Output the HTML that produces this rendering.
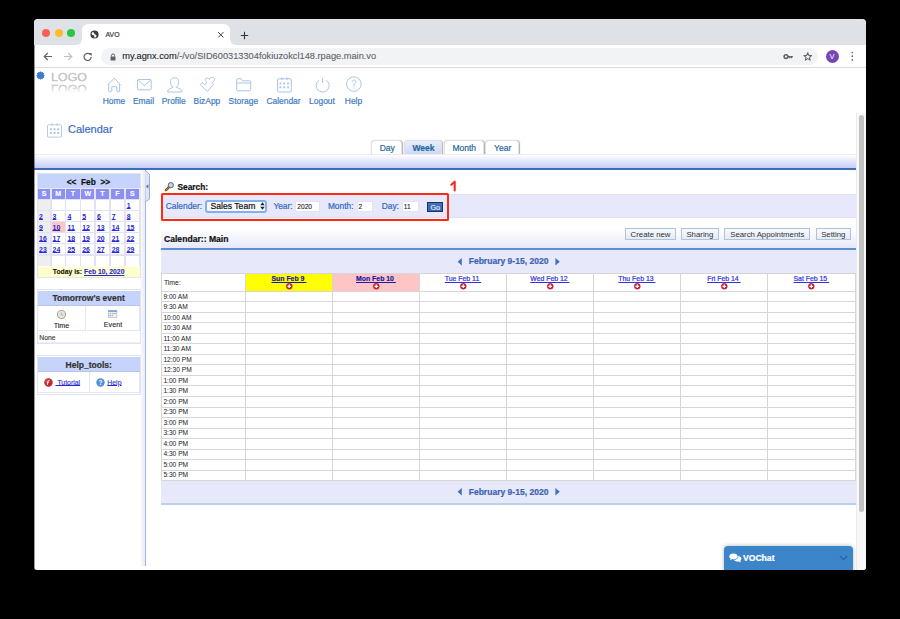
<!DOCTYPE html><html><head><meta charset="utf-8"><title>AVO</title><style>
*{box-sizing:border-box;margin:0;padding:0}
html,body{width:900px;height:619px;background:#000;overflow:hidden;font-family:"Liberation Sans",sans-serif}
.abs{position:absolute}
#win{position:absolute;left:34px;top:19px;width:832px;height:551px;background:linear-gradient(#cfd2d7 0,#dee1e6 2px,#dee1e6 26px,#fff 26px);border-radius:4px 4px 3px 3px;overflow:hidden}
.t{position:absolute;white-space:nowrap;line-height:1;-webkit-text-stroke:0.2px currentColor}
.nav{color:#3f7cc2;font-size:8.4px}
.ico{position:absolute;overflow:visible}
.lnk{color:#1a1acc;text-decoration:underline}
</style></head><body>
<div id="win">
<div class="abs" style="left:0.00px;top:0.00px;width:832.00px;height:26.00px;background:#dee1e6"></div>
<div class="abs" style="left:8.30px;top:9.50px;width:8.00px;height:8.00px;background:#fe5f57;border-radius:50%"></div>
<div class="abs" style="left:20.60px;top:9.50px;width:8.00px;height:8.00px;background:#febc2e;border-radius:50%"></div>
<div class="abs" style="left:32.90px;top:9.50px;width:8.00px;height:8.00px;background:#28c840;border-radius:50%"></div>
<div class="abs" style="left:48.00px;top:5.00px;width:148.00px;height:21.00px;background:#fff;border-radius:6px 6px 0 0"></div>
<svg class="ico" style="left:42.00px;top:20.00px" width="6" height="6" viewBox="0 0 6 6"><path d="M6 0 V6 H0 A6 6 0 0 0 6 0Z" fill="#fff"/></svg>
<svg class="ico" style="left:196.00px;top:20.00px" width="6" height="6" viewBox="0 0 6 6"><path d="M0 0 V6 H6 A6 6 0 0 1 0 0Z" fill="#fff"/></svg>
<svg class="ico" style="left:56.30px;top:11.30px" width="9" height="9" viewBox="0 0 9 9"><circle cx="4.5" cy="4.5" r="4.1" fill="#3c3d40"/><path d="M2.1 2.4 C2.9 1.9 4.2 2.1 4.1 3.1 C4 3.9 4.7 4.3 5.5 4.7 C6.6 5.2 6.8 6.1 6.1 6.9 C5.5 7.5 4.5 7.6 3.7 7.3 C4.6 6.6 4.9 6 4 5.5 C3.1 5.1 1.9 4.9 1.6 3.9 C1.4 3.3 1.6 2.8 2.1 2.4Z" fill="#fff"/></svg>
<div class="t" style="left:71.50px;top:13.46px;font-size:6.9px;color:#3c3c3c">AVO</div>
<svg class="ico" style="left:182.80px;top:12.20px" width="7.6" height="7.6" viewBox="0 0 7.6 7.6"><path d="M1.2 1.2 L6.4 6.4 M6.4 1.2 L1.2 6.4" stroke="#3c3c3c" stroke-width="1.0"/></svg>
<svg class="ico" style="left:205.50px;top:11.50px" width="9" height="9" viewBox="0 0 9 9"><path d="M4.5 0.8 V8.2 M0.8 4.5 H8.2" stroke="#333" stroke-width="1.1"/></svg>
<div class="abs" style="left:0.00px;top:26.00px;width:832.00px;height:22.00px;background:#fff"></div>
<div class="abs" style="left:0.00px;top:48.00px;width:832.00px;height:1.00px;background:#dadce0"></div>
<svg class="ico" style="left:9.00px;top:33.00px" width="10" height="9" viewBox="0 0 10 9"><path d="M9 4.5 H1.3 M4.8 1 L1.2 4.5 L4.8 8" stroke="#5f6368" stroke-width="1.2" fill="none"/></svg>
<svg class="ico" style="left:29.00px;top:33.00px" width="10" height="9" viewBox="0 0 10 9"><path d="M1 4.5 H8.7 M5.2 1 L8.8 4.5 L5.2 8" stroke="#bdc1c6" stroke-width="1.2" fill="none"/></svg>
<svg class="ico" style="left:48.50px;top:32.80px" width="10" height="10" viewBox="0 0 10 10"><path d="M8.2 4.9 A3.6 3.6 0 1 1 7.1 2.3" stroke="#5f6368" stroke-width="1.2" fill="none"/><path d="M5.4 0.9 H8.6 V4.1 Z" fill="#5f6368"/></svg>
<div class="abs" style="left:67.00px;top:29.00px;width:717.00px;height:17.00px;background:#f1f3f4;border-radius:9px"></div>
<svg class="ico" style="left:75.50px;top:33.60px" width="6" height="8" viewBox="0 0 6 8"><path d="M1.4 3.6 V2.6 A1.6 1.6 0 0 1 4.6 2.6 V3.6" stroke="#5f6368" stroke-width="1" fill="none"/><rect x="0.5" y="3.5" width="5" height="4" rx="0.6" fill="#5f6368"/></svg>
<div class="t" id="url" style="left:88.30px;top:33.07px;font-size:9.25px;-webkit-text-stroke:0.1px currentColor"><span style="color:#202124">my.agnx.com</span><span style="color:#5f6368">/-/vo/SID600313304fokiuzokcl148.rpage.main.vo</span></div>
<svg class="ico" style="left:748.50px;top:33.50px" width="11" height="8" viewBox="0 0 11 8"><circle cx="3" cy="3.6" r="1.9" fill="none" stroke="#5f6368" stroke-width="1.5"/><path d="M4.6 2.9 H9.8 V4.4 H9 V5.3 H8 V4.4 H7.2 V5.3 H6.2 V4.4 H4.6Z" fill="#5f6368"/></svg>
<svg class="ico" style="left:769.00px;top:32.80px" width="9.5" height="9" viewBox="0 0 9.5 9"><path d="M4.75 0.8 L5.85 3.4 L8.6 3.6 L6.5 5.4 L7.15 8.1 L4.75 6.6 L2.35 8.1 L3 5.4 L0.9 3.6 L3.65 3.4Z" fill="none" stroke="#5f6368" stroke-width="1.05" stroke-linejoin="round"/></svg>
<div class="abs" style="left:791.50px;top:30.80px;width:13.00px;height:13.00px;background:#7646b8;border-radius:50%"></div>
<div class="t" style="left:598.00px;width:400px;text-align:center;top:33.94px;font-size:7.4px;color:#fff;-webkit-text-stroke:0">V</div>
<svg class="ico" style="left:815.50px;top:32.00px" width="5" height="11" viewBox="0 0 5 11"><circle cx="2.3" cy="1.5" r="0.85" fill="#5f6368"/><circle cx="2.3" cy="5.2" r="0.85" fill="#5f6368"/><circle cx="2.3" cy="8.9" r="0.85" fill="#5f6368"/></svg>
<svg class="ico" style="left:2.30px;top:51.80px" width="9" height="9" viewBox="0 0 9 9"><path d="M8.80 4.50 L7.78 5.38 L8.22 6.65 L6.90 6.90 L6.65 8.22 L5.38 7.78 L4.50 8.80 L3.62 7.78 L2.35 8.22 L2.10 6.90 L0.78 6.65 L1.22 5.38 L0.20 4.50 L1.22 3.62 L0.78 2.35 L2.10 2.10 L2.35 0.78 L3.62 1.22 L4.50 0.20 L5.38 1.22 L6.65 0.78 L6.90 2.10 L8.22 2.35 L7.78 3.62Z" fill="#3b7bd0"/></svg>
<div class="t" style="left:17.0px;top:54.2px;font-size:10.4px;color:#c4c4c4;-webkit-text-stroke:0.35px #c4c4c4;transform:scaleX(1.2);transform-origin:0 0;">LOGO</div>
<div class="t" style="left:17.0px;top:63.5px;font-size:10.4px;color:#b8b8b8;-webkit-text-stroke:0.35px #b8b8b8;transform:scaleX(1.2) scaleY(-1.12);transform-origin:0 50%;-webkit-mask-image:linear-gradient(to top,rgba(0,0,0,0.95) 15%,rgba(0,0,0,0) 90%);">LOGO</div>
<div class="t" style="left:-120.10px;width:400px;text-align:center;top:77.55px;font-size:8.45px;color:#3f7cc2">Home</div>
<div class="t" style="left:-90.50px;width:400px;text-align:center;top:77.55px;font-size:8.45px;color:#3f7cc2">Email</div>
<div class="t" style="left:-60.30px;width:400px;text-align:center;top:77.55px;font-size:8.45px;color:#3f7cc2">Profile</div>
<div class="t" style="left:-27.10px;width:400px;text-align:center;top:77.55px;font-size:8.45px;color:#3f7cc2">BizApp</div>
<div class="t" style="left:9.40px;width:400px;text-align:center;top:77.55px;font-size:8.45px;color:#3f7cc2">Storage</div>
<div class="t" style="left:49.50px;width:400px;text-align:center;top:77.55px;font-size:8.45px;color:#3f7cc2">Calendar</div>
<div class="t" style="left:88.00px;width:400px;text-align:center;top:77.55px;font-size:8.45px;color:#3f7cc2">Logout</div>
<div class="t" style="left:119.50px;width:400px;text-align:center;top:77.55px;font-size:8.45px;color:#3f7cc2">Help</div>
<svg class="ico" style="left:73.00px;top:57.50px" width="15" height="16" viewBox="0 0 15 16"><path d="M0.6 8.1 L7.3 1.1 L13.7 8.1 M1.7 6.9 V14.2 Q1.7 14.7 2.2 14.7 H4.3 Q4.8 14.7 4.8 14.2 V9.7 H9.8 V14.2 Q9.8 14.7 10.3 14.7 H12.1 Q12.6 14.7 12.6 14.2 V6.9" stroke="#a9c6e8" stroke-width="1" fill="none"/></svg>
<svg class="ico" style="left:102.50px;top:59.80px" width="15" height="12" viewBox="0 0 15 12"><rect x="0.5" y="0.5" width="13.7" height="10.3" rx="1" stroke="#a9c6e8" stroke-width="1" fill="none"/><path d="M0.9 0.9 L7.35 6.6 L13.8 0.9" stroke="#a9c6e8" stroke-width="1" fill="none"/></svg>
<svg class="ico" style="left:132.50px;top:57.50px" width="16" height="16" viewBox="0 0 16 16"><path d="M5.8 9.8 C4.4 9 3.6 7.6 3.6 5.6 V4.2 C3.6 2 5.2 0.7 7.6 0.7 C10 0.7 11.6 2 11.6 4.2 V5.6 C11.6 7.6 10.8 9 9.4 9.8 V10.4 C11.8 11.2 14.8 12.4 14.8 14.2 V15 H0.7 V14.2 C0.7 12.4 3.6 11.2 5.8 10.4 Z" stroke="#a9c6e8" stroke-width="1" fill="none"/></svg>
<svg class="ico" style="left:165.00px;top:57.00px" width="17" height="17" viewBox="0 0 17 17"><path d="M8.2 15.4 L1.2 8.4 L3.4 6.3 C4 7.4 4.4 8.4 5.4 8.4 C6.6 8.4 7.8 7.2 7.6 6.1 C7.2 5 6 4.4 6.4 3.2 C6.8 2.2 8.6 1.8 9.6 2.4 L10.3 3.4 C10.8 2.4 11.6 1.5 12.8 1.3 C14.2 1.2 15.6 2.2 15.6 3.4 C15.6 4.6 14.6 5.4 13.2 6.4 L14.6 8.4 Z" stroke="#a9c6e8" stroke-width="1" fill="none"/></svg>
<svg class="ico" style="left:202.00px;top:58.50px" width="16" height="14" viewBox="0 0 16 14"><path d="M0.7 2 Q0.7 0.8 1.9 0.8 H5.3 L6.6 2.8 H13.6 Q14.7 2.8 14.7 3.9 V11.8 Q14.7 12.8 13.6 12.8 H1.8 Q0.7 12.8 0.7 11.8 Z M0.7 5 H14.7" stroke="#a9c6e8" stroke-width="1" fill="none"/></svg>
<svg class="ico" style="left:242.50px;top:57.50px" width="15" height="16" viewBox="0 0 15 16"><rect x="0.5" y="1.8" width="13.8" height="13.2" rx="1.2" fill="none" stroke="#a9c6e8" stroke-width="1"/><path d="M4.8 0.3 V3.2 M10 0.3 V3.2" stroke="#a9c6e8" stroke-width="1"/><rect x="2.45" y="5.55" width="1.9" height="1.9" fill="#a9c6e8"/><rect x="2.45" y="9.35" width="1.9" height="1.9" fill="#a9c6e8"/><rect x="6.25" y="5.55" width="1.9" height="1.9" fill="#a9c6e8"/><rect x="6.25" y="9.35" width="1.9" height="1.9" fill="#a9c6e8"/><rect x="10.05" y="5.55" width="1.9" height="1.9" fill="#a9c6e8"/><rect x="10.05" y="9.35" width="1.9" height="1.9" fill="#a9c6e8"/></svg>
<svg class="ico" style="left:280.50px;top:57.50px" width="15" height="16" viewBox="0 0 15 16"><path d="M3.87 3.28 A6.5 6.5 0 1 0 11.33 3.28" stroke="#a9c6e8" stroke-width="1" fill="none"/><path d="M7.6 0.8 V6.1" stroke="#a9c6e8" stroke-width="1" fill="none"/></svg>
<svg class="ico" style="left:311.50px;top:57.00px" width="16" height="16" viewBox="0 0 16 16"><circle cx="7.9" cy="8.1" r="7.3" stroke="#a9c6e8" stroke-width="1" fill="none"/><path d="M6.1 6 C6.1 4.7 6.9 4.1 7.9 4.1 C8.9 4.1 9.7 4.8 9.7 5.8 C9.7 7 8 7.4 8 9.2 V10.4" stroke="#a9c6e8" stroke-width="1" fill="none"/><circle cx="8" cy="12.1" r="0.55" fill="#a9c6e8"/></svg>
<svg class="ico" style="left:13.00px;top:103.50px" width="15" height="15" viewBox="0 0 15 15"><rect x="0.5" y="1.8" width="14" height="12.3" rx="0.8" fill="none" stroke="#b4cde8" stroke-width="1"/><path d="M5.2 0.3 V2.8 M10 0.3 V2.8" stroke="#b4cde8" stroke-width="1.2"/><rect x="2.90" y="5.30" width="2" height="2" rx="0.4" fill="#a8c6e6"/><rect x="2.90" y="9.00" width="2" height="2" rx="0.4" fill="#a8c6e6"/><rect x="6.55" y="5.30" width="2" height="2" rx="0.4" fill="#a8c6e6"/><rect x="6.55" y="9.00" width="2" height="2" rx="0.4" fill="#a8c6e6"/><rect x="10.20" y="5.30" width="2" height="2" rx="0.4" fill="#a8c6e6"/><rect x="10.20" y="9.00" width="2" height="2" rx="0.4" fill="#a8c6e6"/></svg>
<div class="t" style="left:34.00px;top:104.79px;font-size:11px;color:#3b6dbf">Calendar</div>
<div class="abs" style="left:337.40px;top:121.30px;width:30.80px;height:14.70px;background:#fff;border:1px solid #e2e2e2;border-bottom:none;border-radius:4px 4px 0 0;box-shadow:0.8px 0.5px 1px rgba(0,0,0,0.3)"></div>
<div class="t" style="left:153.20px;width:400px;text-align:center;top:124.60px;font-size:8.5px;color:#27689a;">Day</div>
<div class="abs" style="left:370.00px;top:121.30px;width:38.20px;height:14.70px;background:linear-gradient(#e8edfc,#cdd6f8);border:1px solid #e2e2e2;border-bottom:none;border-radius:4px 4px 0 0;box-shadow:0.8px 0.5px 1px rgba(0,0,0,0.3)"></div>
<div class="t" style="left:189.50px;width:400px;text-align:center;top:124.60px;font-size:8.5px;color:#27689a;font-weight:bold">Week</div>
<div class="abs" style="left:410.00px;top:121.30px;width:39.60px;height:14.70px;background:#fff;border:1px solid #e2e2e2;border-bottom:none;border-radius:4px 4px 0 0;box-shadow:0.8px 0.5px 1px rgba(0,0,0,0.3)"></div>
<div class="t" style="left:230.20px;width:400px;text-align:center;top:124.60px;font-size:8.5px;color:#27689a;">Month</div>
<div class="abs" style="left:451.40px;top:121.30px;width:33.80px;height:14.70px;background:#fff;border:1px solid #e2e2e2;border-bottom:none;border-radius:4px 4px 0 0;box-shadow:0.8px 0.5px 1px rgba(0,0,0,0.3)"></div>
<div class="t" style="left:268.70px;width:400px;text-align:center;top:124.60px;font-size:8.5px;color:#27689a;">Year</div>
<div class="abs" style="left:0.00px;top:134.80px;width:822.00px;height:14.40px;background:linear-gradient(#ffffff,#c4ccf6);border-top:1px solid #ececec"></div>
<div class="abs" style="left:0.00px;top:149.20px;width:822.00px;height:1.80px;background:#3d6db6"></div>
<div class="abs" style="left:106.00px;top:151.00px;width:5.00px;height:396.00px;background:linear-gradient(to right,rgba(236,238,252,0),#e6e9f8)"></div>
<div class="abs" style="left:111.00px;top:151.00px;width:1.10px;height:396.00px;background:#aab6d4"></div>
<svg class="ico" style="left:111.00px;top:151.00px" width="6" height="32" viewBox="0 0 6 32"><path d="M0 0.2 L4.6 4.4 V29.2 L0.6 31.6 Z" fill="#dfe4f5"/><path d="M0.3 0.3 L4.5 4.4 V29.2 L0.6 31.6" fill="none" stroke="#8c9ad0" stroke-width="0.8"/><path d="M3.4 14.2 V18.6 L0.9 16.4Z" fill="#5a6ca4"/></svg>
<div class="abs" style="left:2.60px;top:154.00px;width:104.40px;height:104.80px;background:#fff;border:1px solid #e0e3f0"></div>
<div class="abs" style="left:3.80px;top:155.00px;width:102.20px;height:14.00px;background:#c6d4fb"></div>
<div class="t" style="left:-145.60px;width:400px;text-align:center;top:158.87px;font-size:8.3px;font-weight:bold;color:#111">&lt;&lt;&nbsp;&nbsp;Feb&nbsp;&nbsp;&gt;&gt;</div>
<div class="abs" style="left:3.80px;top:169.20px;width:102.20px;height:11.30px;background:#e4e4f2"></div>
<div class="abs" style="left:4.00px;top:170.00px;width:12.20px;height:10.00px;background:#8c90f4"></div>
<div class="t" style="left:-189.90px;width:400px;text-align:center;top:171.37px;font-size:7px;font-weight:bold;color:#fff;-webkit-text-stroke:0.1px #fff">S</div>
<div class="abs" style="left:17.50px;top:170.00px;width:13.50px;height:10.00px;background:#8c90f4"></div>
<div class="t" style="left:-175.75px;width:400px;text-align:center;top:171.37px;font-size:7px;font-weight:bold;color:#fff;-webkit-text-stroke:0.1px #fff">M</div>
<div class="abs" style="left:32.40px;top:170.00px;width:13.20px;height:10.00px;background:#8c90f4"></div>
<div class="t" style="left:-161.00px;width:400px;text-align:center;top:171.37px;font-size:7px;font-weight:bold;color:#fff;-webkit-text-stroke:0.1px #fff">T</div>
<div class="abs" style="left:47.10px;top:170.00px;width:13.20px;height:10.00px;background:#8c90f4"></div>
<div class="t" style="left:-146.30px;width:400px;text-align:center;top:171.37px;font-size:7px;font-weight:bold;color:#fff;-webkit-text-stroke:0.1px #fff">W</div>
<div class="abs" style="left:61.80px;top:170.00px;width:13.00px;height:10.00px;background:#8c90f4"></div>
<div class="t" style="left:-131.70px;width:400px;text-align:center;top:171.37px;font-size:7px;font-weight:bold;color:#fff;-webkit-text-stroke:0.1px #fff">T</div>
<div class="abs" style="left:76.60px;top:170.00px;width:13.40px;height:10.00px;background:#8c90f4"></div>
<div class="t" style="left:-116.70px;width:400px;text-align:center;top:171.37px;font-size:7px;font-weight:bold;color:#fff;-webkit-text-stroke:0.1px #fff">F</div>
<div class="abs" style="left:91.60px;top:170.00px;width:13.70px;height:10.00px;background:#8c90f4"></div>
<div class="t" style="left:-101.55px;width:400px;text-align:center;top:171.37px;font-size:7px;font-weight:bold;color:#fff;-webkit-text-stroke:0.1px #fff">S</div>
<div class="abs" style="left:3.80px;top:180.20px;width:102.20px;height:67.20px;background:#e2e2f4"></div>
<div class="abs" style="left:4.00px;top:181.00px;width:12.20px;height:10.20px;background:#eeeeee"></div>
<div class="abs" style="left:17.50px;top:181.00px;width:13.50px;height:10.20px;background:#ffffff"></div>
<div class="abs" style="left:32.40px;top:181.00px;width:13.20px;height:10.20px;background:#ffffff"></div>
<div class="abs" style="left:47.10px;top:181.00px;width:13.20px;height:10.20px;background:#ffffff"></div>
<div class="abs" style="left:61.80px;top:181.00px;width:13.00px;height:10.20px;background:#ffffff"></div>
<div class="abs" style="left:76.60px;top:181.00px;width:13.40px;height:10.20px;background:#ffffff"></div>
<div class="abs" style="left:91.60px;top:181.00px;width:13.70px;height:10.20px;background:#ffffff"></div>
<div class="t" style="left:92.70px;top:184.16px;font-size:6.9px;font-weight:bold;color:#2a2ad0;text-decoration:underline;text-decoration-thickness:0.6px;text-underline-offset:0.4px;-webkit-text-stroke:0">1</div>
<div class="abs" style="left:4.00px;top:192.00px;width:12.20px;height:10.00px;background:#eeeeee"></div>
<div class="t" style="left:5.10px;top:194.96px;font-size:6.9px;font-weight:bold;color:#2a2ad0;text-decoration:underline;text-decoration-thickness:0.6px;text-underline-offset:0.4px;-webkit-text-stroke:0">2</div>
<div class="abs" style="left:17.50px;top:192.00px;width:13.50px;height:10.00px;background:#ffffff"></div>
<div class="t" style="left:18.60px;top:194.96px;font-size:6.9px;font-weight:bold;color:#2a2ad0;text-decoration:underline;text-decoration-thickness:0.6px;text-underline-offset:0.4px;-webkit-text-stroke:0">3</div>
<div class="abs" style="left:32.40px;top:192.00px;width:13.20px;height:10.00px;background:#ffffff"></div>
<div class="t" style="left:33.50px;top:194.96px;font-size:6.9px;font-weight:bold;color:#2a2ad0;text-decoration:underline;text-decoration-thickness:0.6px;text-underline-offset:0.4px;-webkit-text-stroke:0">4</div>
<div class="abs" style="left:47.10px;top:192.00px;width:13.20px;height:10.00px;background:#ffffff"></div>
<div class="t" style="left:48.20px;top:194.96px;font-size:6.9px;font-weight:bold;color:#2a2ad0;text-decoration:underline;text-decoration-thickness:0.6px;text-underline-offset:0.4px;-webkit-text-stroke:0">5</div>
<div class="abs" style="left:61.80px;top:192.00px;width:13.00px;height:10.00px;background:#ffffff"></div>
<div class="t" style="left:62.90px;top:194.96px;font-size:6.9px;font-weight:bold;color:#2a2ad0;text-decoration:underline;text-decoration-thickness:0.6px;text-underline-offset:0.4px;-webkit-text-stroke:0">6</div>
<div class="abs" style="left:76.60px;top:192.00px;width:13.40px;height:10.00px;background:#ffffff"></div>
<div class="t" style="left:77.70px;top:194.96px;font-size:6.9px;font-weight:bold;color:#2a2ad0;text-decoration:underline;text-decoration-thickness:0.6px;text-underline-offset:0.4px;-webkit-text-stroke:0">7</div>
<div class="abs" style="left:91.60px;top:192.00px;width:13.70px;height:10.00px;background:#ffffff"></div>
<div class="t" style="left:92.70px;top:194.96px;font-size:6.9px;font-weight:bold;color:#2a2ad0;text-decoration:underline;text-decoration-thickness:0.6px;text-underline-offset:0.4px;-webkit-text-stroke:0">8</div>
<div class="abs" style="left:4.00px;top:203.00px;width:12.20px;height:10.30px;background:#eeeeee"></div>
<div class="t" style="left:5.10px;top:206.26px;font-size:6.9px;font-weight:bold;color:#2a2ad0;text-decoration:underline;text-decoration-thickness:0.6px;text-underline-offset:0.4px;-webkit-text-stroke:0">9</div>
<div class="abs" style="left:17.50px;top:203.00px;width:13.50px;height:10.30px;background:#ffc6c6"></div>
<div class="t" style="left:18.60px;top:206.26px;font-size:6.9px;font-weight:bold;color:#2a2ad0;text-decoration:underline;text-decoration-thickness:0.6px;text-underline-offset:0.4px;-webkit-text-stroke:0">10</div>
<div class="abs" style="left:32.40px;top:203.00px;width:13.20px;height:10.30px;background:#ffffff"></div>
<div class="t" style="left:33.50px;top:206.26px;font-size:6.9px;font-weight:bold;color:#2a2ad0;text-decoration:underline;text-decoration-thickness:0.6px;text-underline-offset:0.4px;-webkit-text-stroke:0">11</div>
<div class="abs" style="left:47.10px;top:203.00px;width:13.20px;height:10.30px;background:#ffffff"></div>
<div class="t" style="left:48.20px;top:206.26px;font-size:6.9px;font-weight:bold;color:#2a2ad0;text-decoration:underline;text-decoration-thickness:0.6px;text-underline-offset:0.4px;-webkit-text-stroke:0">12</div>
<div class="abs" style="left:61.80px;top:203.00px;width:13.00px;height:10.30px;background:#ffffff"></div>
<div class="t" style="left:62.90px;top:206.26px;font-size:6.9px;font-weight:bold;color:#2a2ad0;text-decoration:underline;text-decoration-thickness:0.6px;text-underline-offset:0.4px;-webkit-text-stroke:0">13</div>
<div class="abs" style="left:76.60px;top:203.00px;width:13.40px;height:10.30px;background:#ffffff"></div>
<div class="t" style="left:77.70px;top:206.26px;font-size:6.9px;font-weight:bold;color:#2a2ad0;text-decoration:underline;text-decoration-thickness:0.6px;text-underline-offset:0.4px;-webkit-text-stroke:0">14</div>
<div class="abs" style="left:91.60px;top:203.00px;width:13.70px;height:10.30px;background:#ffffff"></div>
<div class="t" style="left:92.70px;top:206.26px;font-size:6.9px;font-weight:bold;color:#2a2ad0;text-decoration:underline;text-decoration-thickness:0.6px;text-underline-offset:0.4px;-webkit-text-stroke:0">15</div>
<div class="abs" style="left:4.00px;top:214.30px;width:12.20px;height:10.10px;background:#eeeeee"></div>
<div class="t" style="left:5.10px;top:217.36px;font-size:6.9px;font-weight:bold;color:#2a2ad0;text-decoration:underline;text-decoration-thickness:0.6px;text-underline-offset:0.4px;-webkit-text-stroke:0">16</div>
<div class="abs" style="left:17.50px;top:214.30px;width:13.50px;height:10.10px;background:#ffffff"></div>
<div class="t" style="left:18.60px;top:217.36px;font-size:6.9px;font-weight:bold;color:#2a2ad0;text-decoration:underline;text-decoration-thickness:0.6px;text-underline-offset:0.4px;-webkit-text-stroke:0">17</div>
<div class="abs" style="left:32.40px;top:214.30px;width:13.20px;height:10.10px;background:#ffffff"></div>
<div class="t" style="left:33.50px;top:217.36px;font-size:6.9px;font-weight:bold;color:#2a2ad0;text-decoration:underline;text-decoration-thickness:0.6px;text-underline-offset:0.4px;-webkit-text-stroke:0">18</div>
<div class="abs" style="left:47.10px;top:214.30px;width:13.20px;height:10.10px;background:#ffffff"></div>
<div class="t" style="left:48.20px;top:217.36px;font-size:6.9px;font-weight:bold;color:#2a2ad0;text-decoration:underline;text-decoration-thickness:0.6px;text-underline-offset:0.4px;-webkit-text-stroke:0">19</div>
<div class="abs" style="left:61.80px;top:214.30px;width:13.00px;height:10.10px;background:#ffffff"></div>
<div class="t" style="left:62.90px;top:217.36px;font-size:6.9px;font-weight:bold;color:#2a2ad0;text-decoration:underline;text-decoration-thickness:0.6px;text-underline-offset:0.4px;-webkit-text-stroke:0">20</div>
<div class="abs" style="left:76.60px;top:214.30px;width:13.40px;height:10.10px;background:#ffffff"></div>
<div class="t" style="left:77.70px;top:217.36px;font-size:6.9px;font-weight:bold;color:#2a2ad0;text-decoration:underline;text-decoration-thickness:0.6px;text-underline-offset:0.4px;-webkit-text-stroke:0">21</div>
<div class="abs" style="left:91.60px;top:214.30px;width:13.70px;height:10.10px;background:#ffffff"></div>
<div class="t" style="left:92.70px;top:217.36px;font-size:6.9px;font-weight:bold;color:#2a2ad0;text-decoration:underline;text-decoration-thickness:0.6px;text-underline-offset:0.4px;-webkit-text-stroke:0">22</div>
<div class="abs" style="left:4.00px;top:225.40px;width:12.20px;height:10.00px;background:#eeeeee"></div>
<div class="t" style="left:5.10px;top:228.36px;font-size:6.9px;font-weight:bold;color:#2a2ad0;text-decoration:underline;text-decoration-thickness:0.6px;text-underline-offset:0.4px;-webkit-text-stroke:0">23</div>
<div class="abs" style="left:17.50px;top:225.40px;width:13.50px;height:10.00px;background:#ffffff"></div>
<div class="t" style="left:18.60px;top:228.36px;font-size:6.9px;font-weight:bold;color:#2a2ad0;text-decoration:underline;text-decoration-thickness:0.6px;text-underline-offset:0.4px;-webkit-text-stroke:0">24</div>
<div class="abs" style="left:32.40px;top:225.40px;width:13.20px;height:10.00px;background:#ffffff"></div>
<div class="t" style="left:33.50px;top:228.36px;font-size:6.9px;font-weight:bold;color:#2a2ad0;text-decoration:underline;text-decoration-thickness:0.6px;text-underline-offset:0.4px;-webkit-text-stroke:0">25</div>
<div class="abs" style="left:47.10px;top:225.40px;width:13.20px;height:10.00px;background:#ffffff"></div>
<div class="t" style="left:48.20px;top:228.36px;font-size:6.9px;font-weight:bold;color:#2a2ad0;text-decoration:underline;text-decoration-thickness:0.6px;text-underline-offset:0.4px;-webkit-text-stroke:0">26</div>
<div class="abs" style="left:61.80px;top:225.40px;width:13.00px;height:10.00px;background:#ffffff"></div>
<div class="t" style="left:62.90px;top:228.36px;font-size:6.9px;font-weight:bold;color:#2a2ad0;text-decoration:underline;text-decoration-thickness:0.6px;text-underline-offset:0.4px;-webkit-text-stroke:0">27</div>
<div class="abs" style="left:76.60px;top:225.40px;width:13.40px;height:10.00px;background:#ffffff"></div>
<div class="t" style="left:77.70px;top:228.36px;font-size:6.9px;font-weight:bold;color:#2a2ad0;text-decoration:underline;text-decoration-thickness:0.6px;text-underline-offset:0.4px;-webkit-text-stroke:0">28</div>
<div class="abs" style="left:91.60px;top:225.40px;width:13.70px;height:10.00px;background:#ffffff"></div>
<div class="t" style="left:92.70px;top:228.36px;font-size:6.9px;font-weight:bold;color:#2a2ad0;text-decoration:underline;text-decoration-thickness:0.6px;text-underline-offset:0.4px;-webkit-text-stroke:0">29</div>
<div class="abs" style="left:4.00px;top:236.50px;width:12.20px;height:10.30px;background:#eeeeee"></div>
<div class="abs" style="left:17.50px;top:236.50px;width:13.50px;height:10.30px;background:#ffffff"></div>
<div class="abs" style="left:32.40px;top:236.50px;width:13.20px;height:10.30px;background:#ffffff"></div>
<div class="abs" style="left:47.10px;top:236.50px;width:13.20px;height:10.30px;background:#ffffff"></div>
<div class="abs" style="left:61.80px;top:236.50px;width:13.00px;height:10.30px;background:#ffffff"></div>
<div class="abs" style="left:76.60px;top:236.50px;width:13.40px;height:10.30px;background:#ffffff"></div>
<div class="abs" style="left:91.60px;top:236.50px;width:13.70px;height:10.30px;background:#ffffff"></div>
<div class="abs" style="left:3.80px;top:247.60px;width:102.20px;height:10.20px;background:#ffffcc"></div>
<div class="t" style="left:-145.40px;width:400px;text-align:center;top:249.64px;font-size:6.8px;font-weight:bold;color:#111;-webkit-text-stroke:0.1px currentColor">Today is: <span style="color:#2828c8;text-decoration:underline;text-decoration-thickness:0.6px">Feb 10, 2020</span></div>
<div class="abs" style="left:2.60px;top:270.40px;width:104.40px;height:55.00px;background:#fff;border:1px solid #e0e3f0"></div>
<div class="abs" style="left:3.70px;top:271.50px;width:102.30px;height:15.10px;background:#c6d4fb;border-bottom:1px solid #b9c4e4"></div>
<div class="t" style="left:-145.40px;width:400px;text-align:center;top:275.20px;font-size:8.5px;font-weight:bold;color:#333">Tomorrow's event</div>
<div class="abs" style="left:3.70px;top:286.60px;width:47.90px;height:25.40px;background:#fff;box-shadow:-1px -1px 0 #e4e6f4 inset"></div>
<div class="abs" style="left:52.60px;top:286.60px;width:53.40px;height:25.40px;background:#fff;box-shadow:-1px -1px 0 #e4e6f4 inset"></div>
<svg class="ico" style="left:23.00px;top:291.00px" width="9" height="9" viewBox="0 0 9 9"><circle cx="4.5" cy="4.5" r="4" fill="#f6f3ea" stroke="#b99b6e" stroke-width="1.1"/><circle cx="4.5" cy="4.5" r="2.6" fill="#cfe0f2"/><path d="M4.5 2.8 V4.6 L5.8 5.2" stroke="#8a9ab0" stroke-width="0.6" fill="none"/></svg>
<div class="t" style="left:-172.50px;width:400px;text-align:center;top:302.81px;font-size:7.2px;color:#222;-webkit-text-stroke:0.1px currentColor">Time</div>
<svg class="ico" style="left:74.30px;top:291.40px" width="9.2" height="8" viewBox="0 0 9.2 8"><rect x="0.3" y="0.3" width="8.6" height="7.4" fill="#f4f6fb" stroke="#8fb0d8" stroke-width="0.6"/><rect x="0.3" y="0.3" width="8.6" height="1.8" fill="#7fa6dc"/><rect x="1.5" y="3" width="1.6" height="1.2" fill="#e6b566"/><rect x="3.8" y="3" width="1.6" height="1.2" fill="#9cc28a"/><rect x="6.1" y="3" width="1.6" height="1.2" fill="#d98a8a"/><rect x="1.5" y="5" width="1.6" height="1.2" fill="#8aa6d9"/><rect x="3.8" y="5" width="1.6" height="1.2" fill="#e6b566"/></svg>
<div class="t" style="left:-121.00px;width:400px;text-align:center;top:301.91px;font-size:7.2px;color:#222;-webkit-text-stroke:0.1px currentColor">Event</div>
<div class="abs" style="left:3.70px;top:313.00px;width:102.30px;height:11.40px;background:#fff;box-shadow:0 -1px 0 #eceef8 inset"></div>
<div class="t" style="left:5.30px;top:315.64px;font-size:6.8px;color:#333;-webkit-text-stroke:0.1px currentColor">None</div>
<div class="abs" style="left:2.60px;top:336.40px;width:104.40px;height:39.20px;background:#fff;border:1px solid #e0e3f0"></div>
<div class="abs" style="left:3.70px;top:337.50px;width:102.30px;height:15.30px;background:#c6d4fb;border-bottom:1px solid #b9c4e4"></div>
<div class="t" style="left:-145.30px;width:400px;text-align:center;top:341.60px;font-size:8.5px;font-weight:bold;color:#333">Help_tools:</div>
<div class="abs" style="left:3.70px;top:352.80px;width:52.10px;height:21.20px;background:#fff;box-shadow:-1px -1px 0 #e4e6f4 inset"></div>
<div class="abs" style="left:55.80px;top:352.80px;width:50.20px;height:21.20px;background:#fff;box-shadow:-1px -1px 0 #e4e6f4 inset"></div>
<svg class="ico" style="left:9.60px;top:359.00px" width="9" height="9" viewBox="0 0 9 9"><circle cx="4.5" cy="4.5" r="4.2" fill="#c8262a"/><circle cx="4.5" cy="4.5" r="4.2" fill="url(#gr1)"/><path d="M5.6 2.2 C4.4 2 3.9 3 3.7 4.4 L3.3 6.9 M2.8 4.3 H5" stroke="#fff" stroke-width="0.9" fill="none"/><defs><radialGradient id="gr1" cx="0.35" cy="0.3" r="0.7"><stop offset="0" stop-color="#f06060" stop-opacity="0.8"/><stop offset="1" stop-color="#a01010" stop-opacity="0"/></radialGradient></defs></svg>
<div class="t" style="left:21.50px;top:360.76px;font-size:6.9px;color:#2a2acc;text-decoration:underline;text-decoration-thickness:0.6px;text-underline-offset:0.3px;-webkit-text-stroke:0.1px currentColor">&nbsp;Tutorial</div>
<svg class="ico" style="left:62.20px;top:359.20px" width="9" height="9" viewBox="0 0 9 9"><circle cx="4.5" cy="4.5" r="4.2" fill="#4f8fd6"/><text x="4.5" y="7.1" font-size="6.5" text-anchor="middle" fill="#fff" font-family="Liberation Sans" font-weight="bold">?</text></svg>
<div class="t" style="left:73.30px;top:360.76px;font-size:6.9px;color:#2a2acc;text-decoration:underline;text-decoration-thickness:0.6px;text-underline-offset:0.3px;-webkit-text-stroke:0.1px currentColor">Help</div>
<svg class="ico" style="left:131.00px;top:163.00px" width="9" height="9" viewBox="0 0 9 9"><path d="M3.9 5.1 L0.9 8.2" stroke="#3a2a10" stroke-width="2.3" stroke-linecap="round"/><path d="M3.9 5.1 L0.9 8.2" stroke="#e07810" stroke-width="1.3" stroke-linecap="round"/><circle cx="5.8" cy="3.2" r="2.6" fill="#b4daf8" stroke="#505050" stroke-width="0.9"/></svg>
<div class="t" style="left:143.40px;top:164.49px;font-size:8.4px;font-weight:bold;color:#111">Search:</div>
<svg class="ico" style="left:415.00px;top:161.00px" width="8" height="12" viewBox="0 0 8 12"><path d="M2.3 4.7 L5.7 1.7 V10.5" stroke="#ff2a12" stroke-width="2.1" fill="none" stroke-linecap="round" stroke-linejoin="round"/></svg>
<div class="abs" style="left:127.00px;top:175.20px;width:694.50px;height:24.20px;background:#e8e8fc;border-top:1px solid #dedef0;border-bottom:1px solid #dedef0"></div>
<div class="abs" style="left:127.00px;top:173.60px;width:287.60px;height:28.20px;border:2.3px solid #ff2a12;border-radius:1.5px"></div>
<div class="t" style="left:131.80px;top:183.09px;font-size:8.4px;color:#3068bf">Calender:</div>
<div class="abs" style="left:170.80px;top:180.60px;width:62.20px;height:13.80px;background:#f8f8fa;border:2px solid #7fb0ee;border-radius:3px"></div>
<div class="t" style="left:176.60px;top:183.42px;font-size:8.6px;color:#111">Sales Team</div>
<svg class="ico" style="left:225.50px;top:183.30px" width="5" height="8" viewBox="0 0 5 8"><path d="M2.5 0.3 L4.7 3.2 H0.3Z M2.5 7.7 L4.7 4.8 H0.3Z" fill="#222"/></svg>
<div class="t" style="left:239.40px;top:183.29px;font-size:8.4px;color:#3068bf">Year:</div>
<div class="abs" style="left:261.40px;top:182.20px;width:24.80px;height:10.60px;background:#fff;border:1px solid #e4e4ec"></div>
<div class="t" style="left:263.30px;top:184.61px;font-size:6.6px;color:#222;-webkit-text-stroke:0.1px currentColor">2020</div>
<div class="t" style="left:293.90px;top:183.29px;font-size:8.4px;color:#3068bf">Month:</div>
<div class="abs" style="left:322.60px;top:182.20px;width:16.80px;height:10.60px;background:#fff;border:1px solid #e4e4ec"></div>
<div class="t" style="left:324.40px;top:184.61px;font-size:6.6px;color:#222;-webkit-text-stroke:0.1px currentColor">2</div>
<div class="t" style="left:347.70px;top:183.29px;font-size:8.4px;color:#3068bf">Day:</div>
<div class="abs" style="left:368.10px;top:182.20px;width:17.30px;height:10.60px;background:#fff;border:1px solid #e4e4ec"></div>
<div class="t" style="left:369.80px;top:184.61px;font-size:6.6px;color:#222;-webkit-text-stroke:0.1px currentColor">11</div>
<div class="abs" style="left:392.50px;top:183.10px;width:16.50px;height:10.10px;background:linear-gradient(#3f72c0,#3566b6);border:1px solid #1c3464"></div>
<div class="t" style="left:201.20px;width:400px;text-align:center;top:184.71px;font-size:7.2px;color:#f4f6ff;-webkit-text-stroke:0.1px currentColor">Go</div>
<div class="abs" style="left:127.00px;top:210.00px;width:694.50px;height:19.30px;background:linear-gradient(#ffffff,#e6e8fa)"></div>
<div class="abs" style="left:127.00px;top:229.30px;width:694.50px;height:1.30px;background:#5d8fd4"></div>
<div class="t" style="left:130.00px;top:215.92px;font-size:8.6px;font-weight:bold;color:#111">Calendar:: Main</div>
<div class="abs" style="left:591.00px;top:209.00px;width:51.00px;height:11.60px;background:linear-gradient(#f8fafd,#e4ebf5);border:1px solid #b2c2d8"></div>
<div class="t" style="left:416.50px;width:400px;text-align:center;top:211.50px;font-size:7.8px;color:#333;-webkit-text-stroke:0">Create new</div>
<div class="abs" style="left:647.10px;top:209.00px;width:37.50px;height:11.60px;background:linear-gradient(#f8fafd,#e4ebf5);border:1px solid #b2c2d8"></div>
<div class="t" style="left:465.85px;width:400px;text-align:center;top:211.50px;font-size:7.8px;color:#333;-webkit-text-stroke:0">Sharing</div>
<div class="abs" style="left:690.10px;top:209.00px;width:86.40px;height:11.60px;background:linear-gradient(#f8fafd,#e4ebf5);border:1px solid #b2c2d8"></div>
<div class="t" style="left:533.30px;width:400px;text-align:center;top:211.50px;font-size:7.8px;color:#333;-webkit-text-stroke:0">Search Appointments</div>
<div class="abs" style="left:782.00px;top:209.00px;width:34.60px;height:11.60px;background:linear-gradient(#f8fafd,#e4ebf5);border:1px solid #b2c2d8"></div>
<div class="t" style="left:599.30px;width:400px;text-align:center;top:211.50px;font-size:7.8px;color:#333;-webkit-text-stroke:0">Setting</div>
<div class="abs" style="left:127.00px;top:230.60px;width:694.50px;height:23.70px;background:#e8e8fb"></div>
<div class="t" style="left:274.60px;width:400px;text-align:center;top:238.16px;font-size:8.55px;font-weight:bold;color:#3c64b0">February 9-15, 2020</div>
<svg class="ico" style="left:423.20px;top:238.70px" width="6" height="8" viewBox="0 0 6 8"><path d="M4.8 0.1 V7.6 L0.6 3.85Z" fill="#3f70c8"/></svg>
<svg class="ico" style="left:520.90px;top:238.70px" width="6" height="8" viewBox="0 0 6 8"><path d="M0.4 0.1 V7.6 L4.8 3.85Z" fill="#3f70c8"/></svg>
<div class="abs" style="left:127.70px;top:254.30px;width:693.80px;height:207.78px;background:#fff"></div>
<div class="abs" style="left:211.40px;top:254.80px;width:87.00px;height:17.50px;background:#ffff00"></div>
<div class="abs" style="left:298.40px;top:254.80px;width:87.10px;height:17.50px;background:#ffc4c4"></div>
<div class="abs" style="left:127.70px;top:253.90px;width:693.80px;height:1.00px;background:#d6d6d6"></div>
<div class="abs" style="left:127.70px;top:271.90px;width:693.80px;height:1.00px;background:#d6d6d6"></div>
<div class="abs" style="left:127.70px;top:282.41px;width:693.80px;height:1.00px;background:#d6d6d6"></div>
<div class="abs" style="left:127.70px;top:292.92px;width:693.80px;height:1.00px;background:#d6d6d6"></div>
<div class="abs" style="left:127.70px;top:303.43px;width:693.80px;height:1.00px;background:#d6d6d6"></div>
<div class="abs" style="left:127.70px;top:313.94px;width:693.80px;height:1.00px;background:#d6d6d6"></div>
<div class="abs" style="left:127.70px;top:324.45px;width:693.80px;height:1.00px;background:#d6d6d6"></div>
<div class="abs" style="left:127.70px;top:334.96px;width:693.80px;height:1.00px;background:#d6d6d6"></div>
<div class="abs" style="left:127.70px;top:345.47px;width:693.80px;height:1.00px;background:#d6d6d6"></div>
<div class="abs" style="left:127.70px;top:355.98px;width:693.80px;height:1.00px;background:#d6d6d6"></div>
<div class="abs" style="left:127.70px;top:366.49px;width:693.80px;height:1.00px;background:#d6d6d6"></div>
<div class="abs" style="left:127.70px;top:377.00px;width:693.80px;height:1.00px;background:#d6d6d6"></div>
<div class="abs" style="left:127.70px;top:387.51px;width:693.80px;height:1.00px;background:#d6d6d6"></div>
<div class="abs" style="left:127.70px;top:398.02px;width:693.80px;height:1.00px;background:#d6d6d6"></div>
<div class="abs" style="left:127.70px;top:408.53px;width:693.80px;height:1.00px;background:#d6d6d6"></div>
<div class="abs" style="left:127.70px;top:419.04px;width:693.80px;height:1.00px;background:#d6d6d6"></div>
<div class="abs" style="left:127.70px;top:429.55px;width:693.80px;height:1.00px;background:#d6d6d6"></div>
<div class="abs" style="left:127.70px;top:440.06px;width:693.80px;height:1.00px;background:#d6d6d6"></div>
<div class="abs" style="left:127.70px;top:450.57px;width:693.80px;height:1.00px;background:#d6d6d6"></div>
<div class="abs" style="left:127.70px;top:461.08px;width:693.80px;height:1.00px;background:#d6d6d6"></div>
<div class="abs" style="left:127.40px;top:254.30px;width:1.00px;height:207.78px;background:#d6d6d6"></div>
<div class="abs" style="left:210.90px;top:254.30px;width:1.00px;height:207.78px;background:#d6d6d6"></div>
<div class="abs" style="left:297.90px;top:254.30px;width:1.00px;height:207.78px;background:#d6d6d6"></div>
<div class="abs" style="left:385.00px;top:254.30px;width:1.00px;height:207.78px;background:#d6d6d6"></div>
<div class="abs" style="left:472.00px;top:254.30px;width:1.00px;height:207.78px;background:#d6d6d6"></div>
<div class="abs" style="left:558.90px;top:254.30px;width:1.00px;height:207.78px;background:#d6d6d6"></div>
<div class="abs" style="left:645.90px;top:254.30px;width:1.00px;height:207.78px;background:#d6d6d6"></div>
<div class="abs" style="left:733.00px;top:254.30px;width:1.00px;height:207.78px;background:#d6d6d6"></div>
<div class="abs" style="left:820.60px;top:254.30px;width:1.00px;height:207.78px;background:#d6d6d6"></div>
<div class="t" style="left:129.90px;top:261.16px;font-size:6.9px;color:#1a1a1a;-webkit-text-stroke:0.02px currentColor">Time:</div>
<div class="t" style="left:129.40px;top:274.67px;font-size:6.65px;color:#1a1a1a;-webkit-text-stroke:0.02px currentColor">9:00 AM</div>
<div class="t" style="left:129.40px;top:285.18px;font-size:6.65px;color:#1a1a1a;-webkit-text-stroke:0.02px currentColor">9:30 AM</div>
<div class="t" style="left:129.40px;top:295.69px;font-size:6.65px;color:#1a1a1a;-webkit-text-stroke:0.02px currentColor">10:00 AM</div>
<div class="t" style="left:129.40px;top:306.20px;font-size:6.65px;color:#1a1a1a;-webkit-text-stroke:0.02px currentColor">10:30 AM</div>
<div class="t" style="left:129.40px;top:316.71px;font-size:6.65px;color:#1a1a1a;-webkit-text-stroke:0.02px currentColor">11:00 AM</div>
<div class="t" style="left:129.40px;top:327.22px;font-size:6.65px;color:#1a1a1a;-webkit-text-stroke:0.02px currentColor">11:30 AM</div>
<div class="t" style="left:129.40px;top:337.73px;font-size:6.65px;color:#1a1a1a;-webkit-text-stroke:0.02px currentColor">12:00 PM</div>
<div class="t" style="left:129.40px;top:348.24px;font-size:6.65px;color:#1a1a1a;-webkit-text-stroke:0.02px currentColor">12:30 PM</div>
<div class="t" style="left:129.40px;top:358.75px;font-size:6.65px;color:#1a1a1a;-webkit-text-stroke:0.02px currentColor">1:00 PM</div>
<div class="t" style="left:129.40px;top:369.26px;font-size:6.65px;color:#1a1a1a;-webkit-text-stroke:0.02px currentColor">1:30 PM</div>
<div class="t" style="left:129.40px;top:379.77px;font-size:6.65px;color:#1a1a1a;-webkit-text-stroke:0.02px currentColor">2:00 PM</div>
<div class="t" style="left:129.40px;top:390.28px;font-size:6.65px;color:#1a1a1a;-webkit-text-stroke:0.02px currentColor">2:30 PM</div>
<div class="t" style="left:129.40px;top:400.79px;font-size:6.65px;color:#1a1a1a;-webkit-text-stroke:0.02px currentColor">3:00 PM</div>
<div class="t" style="left:129.40px;top:411.30px;font-size:6.65px;color:#1a1a1a;-webkit-text-stroke:0.02px currentColor">3:30 PM</div>
<div class="t" style="left:129.40px;top:421.81px;font-size:6.65px;color:#1a1a1a;-webkit-text-stroke:0.02px currentColor">4:00 PM</div>
<div class="t" style="left:129.40px;top:432.32px;font-size:6.65px;color:#1a1a1a;-webkit-text-stroke:0.02px currentColor">4:30 PM</div>
<div class="t" style="left:129.40px;top:442.83px;font-size:6.65px;color:#1a1a1a;-webkit-text-stroke:0.02px currentColor">5:00 PM</div>
<div class="t" style="left:129.40px;top:453.34px;font-size:6.65px;color:#1a1a1a;-webkit-text-stroke:0.02px currentColor">5:30 PM</div>
<div class="t" style="left:54.90px;width:400px;text-align:center;top:257.46px;font-size:6.9px;color:#1a1aa8;text-decoration:underline;text-decoration-thickness:0.7px;text-underline-offset:1px;font-weight:bold">Sun Feb 9&nbsp;</div>
<svg class="ico" style="left:251.60px;top:264.00px" width="6.6" height="6.6" viewBox="0 0 6.6 6.6"><circle cx="3.3" cy="3.3" r="3" fill="#d4202a" stroke="#9a1018" stroke-width="0.4"/><path d="M3.3 1.5 V5.1 M1.5 3.3 H5.1" stroke="#fff" stroke-width="1.3"/></svg>
<div class="t" style="left:141.95px;width:400px;text-align:center;top:257.46px;font-size:6.9px;color:#1a1aa8;text-decoration:underline;text-decoration-thickness:0.7px;text-underline-offset:1px;font-weight:bold">Mon Feb 10&nbsp;</div>
<svg class="ico" style="left:338.65px;top:264.00px" width="6.6" height="6.6" viewBox="0 0 6.6 6.6"><circle cx="3.3" cy="3.3" r="3" fill="#d4202a" stroke="#9a1018" stroke-width="0.4"/><path d="M3.3 1.5 V5.1 M1.5 3.3 H5.1" stroke="#fff" stroke-width="1.3"/></svg>
<div class="t" style="left:229.00px;width:400px;text-align:center;top:257.46px;font-size:6.9px;color:#3030e8;text-decoration:underline;text-decoration-thickness:0.7px;text-underline-offset:1px;">Tue Feb 11&nbsp;</div>
<svg class="ico" style="left:425.70px;top:264.00px" width="6.6" height="6.6" viewBox="0 0 6.6 6.6"><circle cx="3.3" cy="3.3" r="3" fill="#d4202a" stroke="#9a1018" stroke-width="0.4"/><path d="M3.3 1.5 V5.1 M1.5 3.3 H5.1" stroke="#fff" stroke-width="1.3"/></svg>
<div class="t" style="left:315.95px;width:400px;text-align:center;top:257.46px;font-size:6.9px;color:#3030e8;text-decoration:underline;text-decoration-thickness:0.7px;text-underline-offset:1px;">Wed Feb 12&nbsp;</div>
<svg class="ico" style="left:512.65px;top:264.00px" width="6.6" height="6.6" viewBox="0 0 6.6 6.6"><circle cx="3.3" cy="3.3" r="3" fill="#d4202a" stroke="#9a1018" stroke-width="0.4"/><path d="M3.3 1.5 V5.1 M1.5 3.3 H5.1" stroke="#fff" stroke-width="1.3"/></svg>
<div class="t" style="left:402.90px;width:400px;text-align:center;top:257.46px;font-size:6.9px;color:#3030e8;text-decoration:underline;text-decoration-thickness:0.7px;text-underline-offset:1px;">Thu Feb 13&nbsp;</div>
<svg class="ico" style="left:599.60px;top:264.00px" width="6.6" height="6.6" viewBox="0 0 6.6 6.6"><circle cx="3.3" cy="3.3" r="3" fill="#d4202a" stroke="#9a1018" stroke-width="0.4"/><path d="M3.3 1.5 V5.1 M1.5 3.3 H5.1" stroke="#fff" stroke-width="1.3"/></svg>
<div class="t" style="left:489.95px;width:400px;text-align:center;top:257.46px;font-size:6.9px;color:#3030e8;text-decoration:underline;text-decoration-thickness:0.7px;text-underline-offset:1px;">Fri Feb 14&nbsp;</div>
<svg class="ico" style="left:686.65px;top:264.00px" width="6.6" height="6.6" viewBox="0 0 6.6 6.6"><circle cx="3.3" cy="3.3" r="3" fill="#d4202a" stroke="#9a1018" stroke-width="0.4"/><path d="M3.3 1.5 V5.1 M1.5 3.3 H5.1" stroke="#fff" stroke-width="1.3"/></svg>
<div class="t" style="left:577.30px;width:400px;text-align:center;top:257.46px;font-size:6.9px;color:#3030e8;text-decoration:underline;text-decoration-thickness:0.7px;text-underline-offset:1px;">Sat Feb 15&nbsp;</div>
<svg class="ico" style="left:774.00px;top:264.00px" width="6.6" height="6.6" viewBox="0 0 6.6 6.6"><circle cx="3.3" cy="3.3" r="3" fill="#d4202a" stroke="#9a1018" stroke-width="0.4"/><path d="M3.3 1.5 V5.1 M1.5 3.3 H5.1" stroke="#fff" stroke-width="1.3"/></svg>
<div class="abs" style="left:127.00px;top:461.60px;width:694.50px;height:22.40px;background:#e8e8fb"></div>
<div class="abs" style="left:127.00px;top:484.00px;width:694.50px;height:1.60px;background:#b9d0f0"></div>
<div class="t" style="left:274.60px;width:400px;text-align:center;top:469.16px;font-size:8.55px;font-weight:bold;color:#3c64b0">February 9-15, 2020</div>
<svg class="ico" style="left:423.20px;top:468.90px" width="6" height="8" viewBox="0 0 6 8"><path d="M4.8 0.1 V7.6 L0.6 3.85Z" fill="#3f70c8"/></svg>
<svg class="ico" style="left:520.90px;top:468.90px" width="6" height="8" viewBox="0 0 6 8"><path d="M0.4 0.1 V7.6 L4.8 3.85Z" fill="#3f70c8"/></svg>
<div class="abs" style="left:690.00px;top:527.00px;width:129.00px;height:26.00px;background:#3d85c9;border-radius:4px 4px 0 0;box-shadow:0 0 4px rgba(0,0,0,0.3)"></div>
<svg class="ico" style="left:695.00px;top:534.00px" width="13" height="10" viewBox="0 0 13 10"><path d="M4.5 0.5 C2 0.5 0.3 1.8 0.3 3.4 C0.3 4.3 0.8 5 1.6 5.5 L1 7.2 L3.2 6.1 C3.6 6.2 4 6.3 4.5 6.3 C7 6.3 8.7 5 8.7 3.4 C8.7 1.8 7 0.5 4.5 0.5Z" fill="#fff"/><path d="M9.4 3 C11.2 3.4 12.4 4.5 12.4 5.8 C12.4 6.6 12 7.3 11.3 7.8 L11.8 9.4 L9.8 8.4 C9.4 8.5 9 8.5 8.6 8.5 C7 8.5 5.6 7.9 4.9 7 C7.6 6.9 9.6 5.3 9.4 3Z" fill="#fff"/></svg>
<div class="t" style="left:709.00px;top:535.22px;font-size:8.6px;font-weight:bold;color:#fff">VOChat</div>
<svg class="ico" style="left:805.00px;top:536.00px" width="9" height="6" viewBox="0 0 9 6"><path d="M0.8 0.8 L4.5 4.6 L8.2 0.8" stroke="#24609e" stroke-width="1.1" fill="none"/></svg>
<div class="abs" style="left:822.00px;top:94.00px;width:10.00px;height:457.00px;background:#f8f8f8;border-left:1px solid #ebebeb"></div>
<div class="abs" style="left:824.80px;top:95.80px;width:5.00px;height:397.20px;background:#c2c2c2;border-radius:3px"></div>
<div class="abs" style="left:0.00px;top:26.00px;width:1.00px;height:525.00px;background:rgba(0,0,0,0.4)"></div>
</div></body></html>
